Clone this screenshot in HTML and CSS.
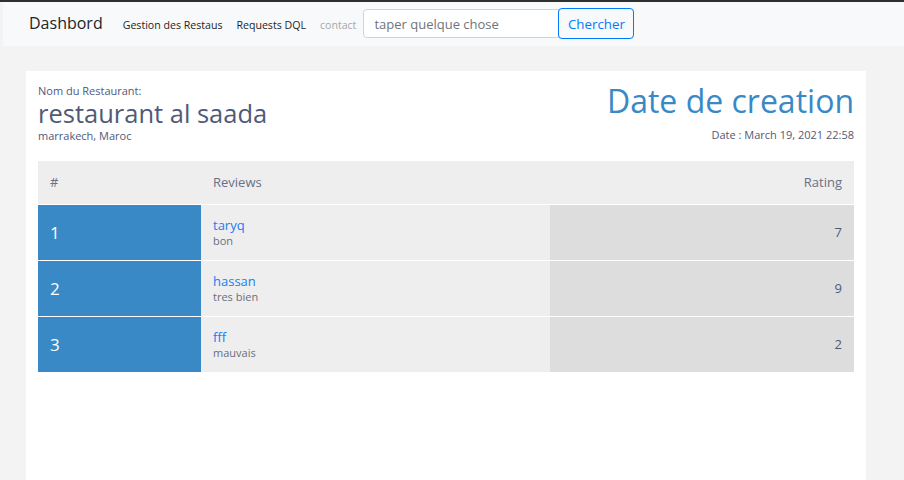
FILE: index.html
```html
<!DOCTYPE html>
<html lang="fr">
<head>
<meta charset="utf-8">
<title>Dashbord</title>
<link rel="stylesheet" href="styles.css">
</head>
<body>
<nav class="navbar">
  <a class="brand" href="#">Dashbord</a>
  <ul class="nav-links">
    <li><a href="#">Gestion des Restaus</a></li>
    <li><a href="#">Requests DQL</a></li>
    <li><a class="muted" href="#">contact</a></li>
  </ul>
  <form class="search">
    <input type="text" placeholder="taper quelque chose">
    <button type="button">Chercher</button>
  </form>
</nav>
<div class="card">
  <div class="head">
    <div class="resto">
      <div class="label">Nom du Restaurant:</div>
      <h2 class="name">restaurant al saada</h2>
      <div class="addr">marrakech, Maroc</div>
    </div>
    <div class="created">
      <h1 class="title">Date de creation</h1>
      <div class="date">Date : March 19, 2021 22:58</div>
    </div>
  </div>
  <table class="reviews">
    <thead>
      <tr><th class="c-no">#</th><th class="c-rev">Reviews</th><th class="c-rate">Rating</th></tr>
    </thead>
    <tbody>
      <tr><td class="no">1</td><td class="rev"><a href="#">taryq</a><span>bon</span></td><td class="rate">7</td></tr>
      <tr><td class="no">2</td><td class="rev"><a href="#">hassan</a><span>tres bien</span></td><td class="rate">9</td></tr>
      <tr><td class="no">3</td><td class="rev"><a href="#">fff</a><span>mauvais</span></td><td class="rate">2</td></tr>
    </tbody>
  </table>
</div>
</body>
</html>
```
FILE: styles.css
```css
* { box-sizing: border-box; }
html, body { height: 100%; }
body {
  margin: 0;
  background: #f3f3f3;
  border-top: 2px solid #2f2f2f;
  font-family: "Open Sans", "Noto Sans", sans-serif;
  color: #505a78;
  overflow: hidden;
}
.navbar {
  margin-left: 3px;
  height: 44px;
  background: #f8f9fa;
  display: flex;
  align-items: center;
  padding: 0 0 2px 26px;
}
.brand {
  font-size: 16px;
  line-height: 20px;
  color: #212529;
  text-decoration: none;
  margin-right: 20px;
}
.nav-links {
  list-style: none;
  display: flex;
  margin: 0;
  padding: 0;
  gap: 14px;
}
.nav-links a {
  font-size: 10.6px;
  line-height: 14px;
  color: #212529;
  text-decoration: none;
}
.nav-links a.muted { color: #a6a8ab; }
.search {
  display: flex;
  margin: 2px 0 0 7px;
}
.search input {
  width: 196px;
  height: 29px;
  border: 1px solid #ced4da;
  border-radius: 4px 0 0 4px;
  padding: 0 10px;
  font-family: inherit;
  font-size: 13px;
  background: #fff;
}
.search input::placeholder { color: #6c757d; }
.search button {
  height: 31px;
  width: 76px;
  margin-top: -1px;
  border: 1px solid #007bff;
  border-radius: 4px;
  background: transparent;
  color: #007bff;
  font-family: inherit;
  font-size: 13.3px;
  margin-left: -1px;
}
.card {
  margin: 25px 0 0 26px;
  width: 840px;
  min-height: 420px;
  background: #fff;
  padding: 12px 12px;
}
.head {
  display: flex;
  justify-content: space-between;
  align-items: flex-start;
  height: 78px;
}
.label, .addr, .date { font-size: 11px; line-height: 14px; }
.label { margin-top: 1px; }
.name {
  margin: 0;
  font-weight: 400;
  font-size: 25.5px;
  line-height: 30px;
}
.addr { margin-top: 1px; }
.created { text-align: right; }
.title {
  margin: 0;
  font-weight: 400;
  font-size: 32px;
  line-height: 36px;
  color: #3989c6;
}
.date { margin-top: 9px; }
.reviews {
  width: 100%;
  border-collapse: collapse;
  table-layout: fixed;
}
.reviews th, .reviews td {
  background: #eee;
  border-bottom: 1px solid #fff;
  padding: 0 12px;
  text-align: left;
  font-weight: 400;
}
.reviews th {
  height: 43px;
  font-size: 13px;
  color: #6a7088;
}
.c-no { width: 163px; }
.c-rev { width: 349px; }
.reviews th.c-rate, .reviews td.rate { text-align: right; }
.reviews td { height: 56px; }
.reviews td.no {
  background: #3989c6;
  color: #fff;
  font-size: 17px;
}
.reviews td.rate {
  background: #ddd;
  font-size: 13px;
}
.rev a {
  display: block;
  color: #1a7cf0;
  text-decoration: none;
  font-size: 13px;
  line-height: 16px;
}
.rev span {
  display: block;
  margin-top: 1px;
  font-size: 11px;
  line-height: 14px;
  color: #6a6f80;
}
```
